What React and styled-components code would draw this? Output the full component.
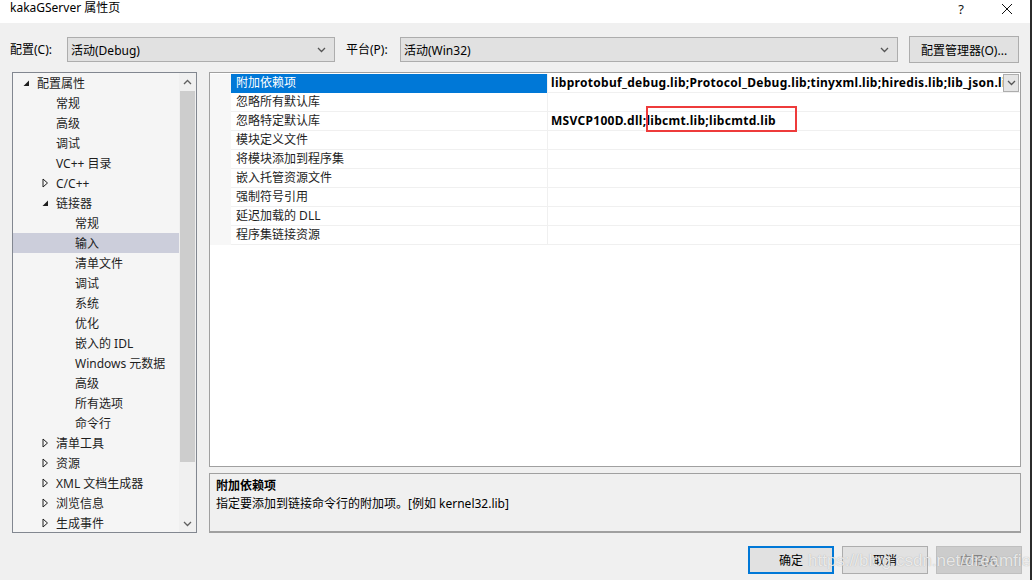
import React from 'react'
import styled, { createGlobalStyle } from 'styled-components';

const treeItems = [
  { label: '配置属性', level: 0, state: 'open' },
  { label: '常规', level: 1 },
  { label: '高级', level: 1 },
  { label: '调试', level: 1 },
  { label: 'VC++ 目录', level: 1 },
  { label: 'C/C++', level: 1, state: 'closed' },
  { label: '链接器', level: 1, state: 'open' },
  { label: '常规', level: 2 },
  { label: '输入', level: 2, selected: true },
  { label: '清单文件', level: 2 },
  { label: '调试', level: 2 },
  { label: '系统', level: 2 },
  { label: '优化', level: 2 },
  { label: '嵌入的 IDL', level: 2 },
  { label: 'Windows 元数据', level: 2 },
  { label: '高级', level: 2 },
  { label: '所有选项', level: 2 },
  { label: '命令行', level: 2 },
  { label: '清单工具', level: 1, state: 'closed' },
  { label: '资源', level: 1, state: 'closed' },
  { label: 'XML 文档生成器', level: 1, state: 'closed' },
  { label: '浏览信息', level: 1, state: 'closed' },
  { label: '生成事件', level: 1, state: 'closed' },
]

const props = [
  { name: '附加依赖项', value: 'libprotobuf_debug.lib;Protocol_Debug.lib;tinyxml.lib;hiredis.lib;lib_json.lib;%(AdditionalDependencies)', selected: true },
  { name: '忽略所有默认库', value: '' },
  { name: '忽略特定默认库', value: 'MSVCP100D.dll;libcmt.lib;libcmtd.lib' },
  { name: '模块定义文件', value: '' },
  { name: '将模块添加到程序集', value: '' },
  { name: '嵌入托管资源文件', value: '' },
  { name: '强制符号引用', value: '' },
  { name: '延迟加载的 DLL', value: '' },
  { name: '程序集链接资源', value: '' },
]

const Chevron = ({ up }) => (
  <svg width="9" height="6" viewBox="0 0 9 6">
    <path d={up ? 'M1 5 L4.5 1.5 L8 5' : 'M1 1 L4.5 4.5 L8 1'} fill="none" stroke="currentColor" strokeWidth="1.3" />
  </svg>
)

const Arrow = ({ state }) => {
  if (state === 'open') {
    return (
      <svg width="7" height="7" viewBox="0 0 7 7">
        <path d="M6 0.5 L6 6 L0.5 6 Z" fill="#1e1e1e" />
      </svg>
    )
  }
  return (
    <svg width="7" height="10" viewBox="0 0 7 10">
      <path d="M1 1 L5.5 5 L1 9 Z" fill="none" stroke="#1e1e1e" strokeWidth="1" />
    </svg>
  )
}

const App = () => {
  return (
    <>
      <GlobalStyle />
      <Window>
        <TitleBar>
          <Title>kakaGServer 属性页</Title>
          <TitleButton>?</TitleButton>
          <TitleButton>
            <svg width="12" height="12" viewBox="0 0 12 12">
              <path d="M1 1 L11 11 M11 1 L1 11" stroke="#111" strokeWidth="1" />
            </svg>
          </TitleButton>
        </TitleBar>

        <Toolbar>
          <Label $width={57}>配置(C):</Label>
          <Combo width={268}>
            <span>活动(Debug)</span>
            <Chevron />
          </Combo>
          <Label $left={11} $width={54}>平台(P):</Label>
          <Combo width={498}>
            <span>活动(Win32)</span>
            <Chevron />
          </Combo>
          <ToolButton>配置管理器(O)...</ToolButton>
        </Toolbar>

        <Main>
          <TreePanel>
            <TreeList>
              {treeItems.map((item, i) => (
                <TreeRow key={i} $selected={item.selected}>
                  <Indent $level={item.level} />
                  <Expander>{item.state && <Arrow state={item.state} />}</Expander>
                  <span>{item.label}</span>
                </TreeRow>
              ))}
            </TreeList>
            <ScrollBar>
              <ScrollArrow><Chevron up /></ScrollArrow>
              <ScrollTrack>
                <Thumb />
              </ScrollTrack>
              <ScrollArrow><Chevron /></ScrollArrow>
            </ScrollBar>
          </TreePanel>

          <RightColumn>
            <Grid>
              {props.map((p, i) => (
                <GridRow key={i}>
                  <Gutter />
                  <NameCell $selected={p.selected}>{p.name}</NameCell>
                  <ValueCell>
                    <ValueText>{p.value}</ValueText>
                    {p.selected && <DropButton><Chevron /></DropButton>}
                  </ValueCell>
                </GridRow>
              ))}
              <RedMark />
            </Grid>
            <Description>
              <DescTitle>附加依赖项</DescTitle>
              <DescText>指定要添加到链接命令行的附加项。[例如 kernel32.lib]</DescText>
            </Description>
          </RightColumn>
        </Main>

        <Footer>
          <DialogButton $default>确定</DialogButton>
          <DialogButton>取消</DialogButton>
          <DialogButton $disabled>应用(A)</DialogButton>
          <Watermark>https://blog.csdn.net/dreamfield</Watermark>
        </Footer>
      </Window>
    </>
  )
}

export default App;


const GlobalStyle = createGlobalStyle`
  body {
    margin: 0;
    background: #f0f0f0;
  }
`;

const Window = styled.div`
  width: 1030px;
  height: 580px;
  background: #f0f0f0;
  border-right: 2px solid #2b2b2b;
  display: flex;
  flex-direction: column;
  font-family: "Noto Sans", "Noto Sans CJK SC", sans-serif;
  font-size: 12px;
  color: #1e1e1e;
  overflow: hidden;
`;

const TitleBar = styled.div`
  height: 23px;
  background: #ffffff;
  display: flex;
  align-items: center;
  padding-left: 10px;
`;

const Title = styled.div`
  flex: 1;
  font-size: 12px;
  line-height: 16px;
  color: #000;
  margin-top: -7px;
`;

const TitleButton = styled.div`
  width: 46px;
  height: 23px;
  display: flex;
  align-items: center;
  justify-content: center;
  font-size: 13px;
  color: #111;
  margin-top: -6px;
`;

const Toolbar = styled.div`
  height: 49px;
  display: flex;
  align-items: flex-start;
  padding: 14px 0 0 10px;
  box-sizing: border-box;
`;

const Label = styled.div`
  line-height: 25px;
  margin-left: ${p => p.$left || 0}px;
  width: ${p => p.$width}px;
  flex-shrink: 0;
  color: #000;
`;

const Combo = styled.div`
  width: ${p => p.width}px;
  height: 25px;
  box-sizing: border-box;
  border: 1px solid #adadad;
  background: #e1e1e1;
  display: flex;
  align-items: center;
  justify-content: space-between;
  padding: 0 8px 0 3px;
  color: #000;
  svg { color: #555; }
`;

const ToolButton = styled.div`
  margin-left: 11px;
  margin-top: -1px;
  width: 110px;
  height: 27px;
  box-sizing: border-box;
  border: 1px solid #adadad;
  background: #e1e1e1;
  display: flex;
  align-items: center;
  justify-content: center;
  color: #000;
`;

const Main = styled.div`
  height: 461px;
  display: flex;
  padding-left: 12px;
`;

const TreePanel = styled.div`
  width: 185px;
  height: 461px;
  box-sizing: border-box;
  border: 1px solid #828790;
  background: #f5f5f5;
  display: flex;
`;

const TreeList = styled.div`
  flex: 1;
  overflow: hidden;
`;

const TreeRow = styled.div`
  height: 20px;
  display: flex;
  align-items: center;
  white-space: nowrap;
  background: ${p => (p.$selected ? '#cccedb' : 'transparent')};
  color: #1e1e1e;
`;

const Indent = styled.div`
  width: ${p => 6 + p.$level * 19}px;
  flex-shrink: 0;
`;

const Expander = styled.div`
  width: 18px;
  flex-shrink: 0;
  display: flex;
  align-items: center;
  padding-left: 4px;
  box-sizing: border-box;
`;

const ScrollBar = styled.div`
  width: 17px;
  display: flex;
  flex-direction: column;
  background: #f0f0f0;
`;

const ScrollArrow = styled.div`
  height: 17px;
  display: flex;
  align-items: center;
  justify-content: center;
  color: #606060;
`;

const ScrollTrack = styled.div`
  flex: 1;
  padding: 1px 1px;
`;

const Thumb = styled.div`
  height: 371px;
  background: #cdcdcd;
`;

const RightColumn = styled.div`
  margin-left: 12px;
  width: 812px;
  display: flex;
  flex-direction: column;
  gap: 6px;
`;

const Grid = styled.div`
  position: relative;
  height: 396px;
  box-sizing: border-box;
  border: 1px solid #a0a0a0;
  background: #ffffff;
  padding-top: 1px;
`;

const GridRow = styled.div`
  height: 19px;
  display: flex;
`;

const Gutter = styled.div`
  width: 21px;
  background: #f7f7f7;
  flex-shrink: 0;
`;

const NameCell = styled.div`
  width: 316px;
  flex-shrink: 0;
  box-sizing: border-box;
  padding-left: 5px;
  line-height: 18px;
  border-bottom: 1px solid ${p => (p.$selected ? '#0078d7' : '#f0f0f0')};
  background: ${p => (p.$selected ? '#0078d7' : '#ffffff')};
  color: ${p => (p.$selected ? '#ffffff' : '#1e1e1e')};
`;

const ValueCell = styled.div`
  flex: 1;
  min-width: 0;
  display: flex;
  border-left: 1px solid #f0f0f0;
  border-bottom: 1px solid #f0f0f0;
`;

const ValueText = styled.div`
  flex: 1;
  min-width: 0;
  overflow: hidden;
  white-space: nowrap;
  padding-left: 3px;
  line-height: 18px;
  font-weight: 700;
  letter-spacing: 0.3px;
  color: #000;
`;

const DropButton = styled.div`
  width: 16px;
  height: 18px;
  box-sizing: border-box;
  border: 1px solid #adadad;
  background: #e5e5e5;
  display: flex;
  align-items: center;
  justify-content: center;
  color: #555;
  margin-right: 1px;
`;

const RedMark = styled.div`
  position: absolute;
  left: 436px;
  top: 33px;
  width: 151px;
  height: 26px;
  box-sizing: border-box;
  border: 2px solid #ee3b3b;
`;

const Description = styled.div`
  height: 60px;
  box-sizing: border-box;
  border: 1px solid #a0a0a0;
  border-bottom-width: 2px;
  padding: 3px 6px;
  background: #f0f0f0;
`;

const DescTitle = styled.div`
  font-weight: 700;
  line-height: 18px;
  color: #000;
`;

const DescText = styled.div`
  line-height: 18px;
  color: #000;
`;

const Footer = styled.div`
  position: relative;
  flex: 1;
  display: flex;
  justify-content: flex-end;
  align-items: flex-start;
  gap: 8px;
  padding: 13px 8px 0 0;
`;

const DialogButton = styled.div`
  width: 86px;
  height: 28px;
  box-sizing: border-box;
  border: ${p => (p.$default ? '2px solid #0078d7' : p.$disabled ? '1px solid #bfbfbf' : '1px solid #adadad')};
  background: ${p => (p.$disabled ? '#cccccc' : '#e1e1e1')};
  color: ${p => (p.$disabled ? '#838383' : '#000')};
  display: flex;
  align-items: center;
  justify-content: center;
`;

const Watermark = styled.div`
  position: absolute;
  left: 808px;
  top: 18px;
  font-family: "Liberation Sans", Arial, sans-serif;
  font-size: 17px;
  color: rgba(255, 255, 255, 0.75);
  text-shadow: 0 0 1px rgba(120, 120, 120, 0.6);
  white-space: nowrap;
  pointer-events: none;
`;
